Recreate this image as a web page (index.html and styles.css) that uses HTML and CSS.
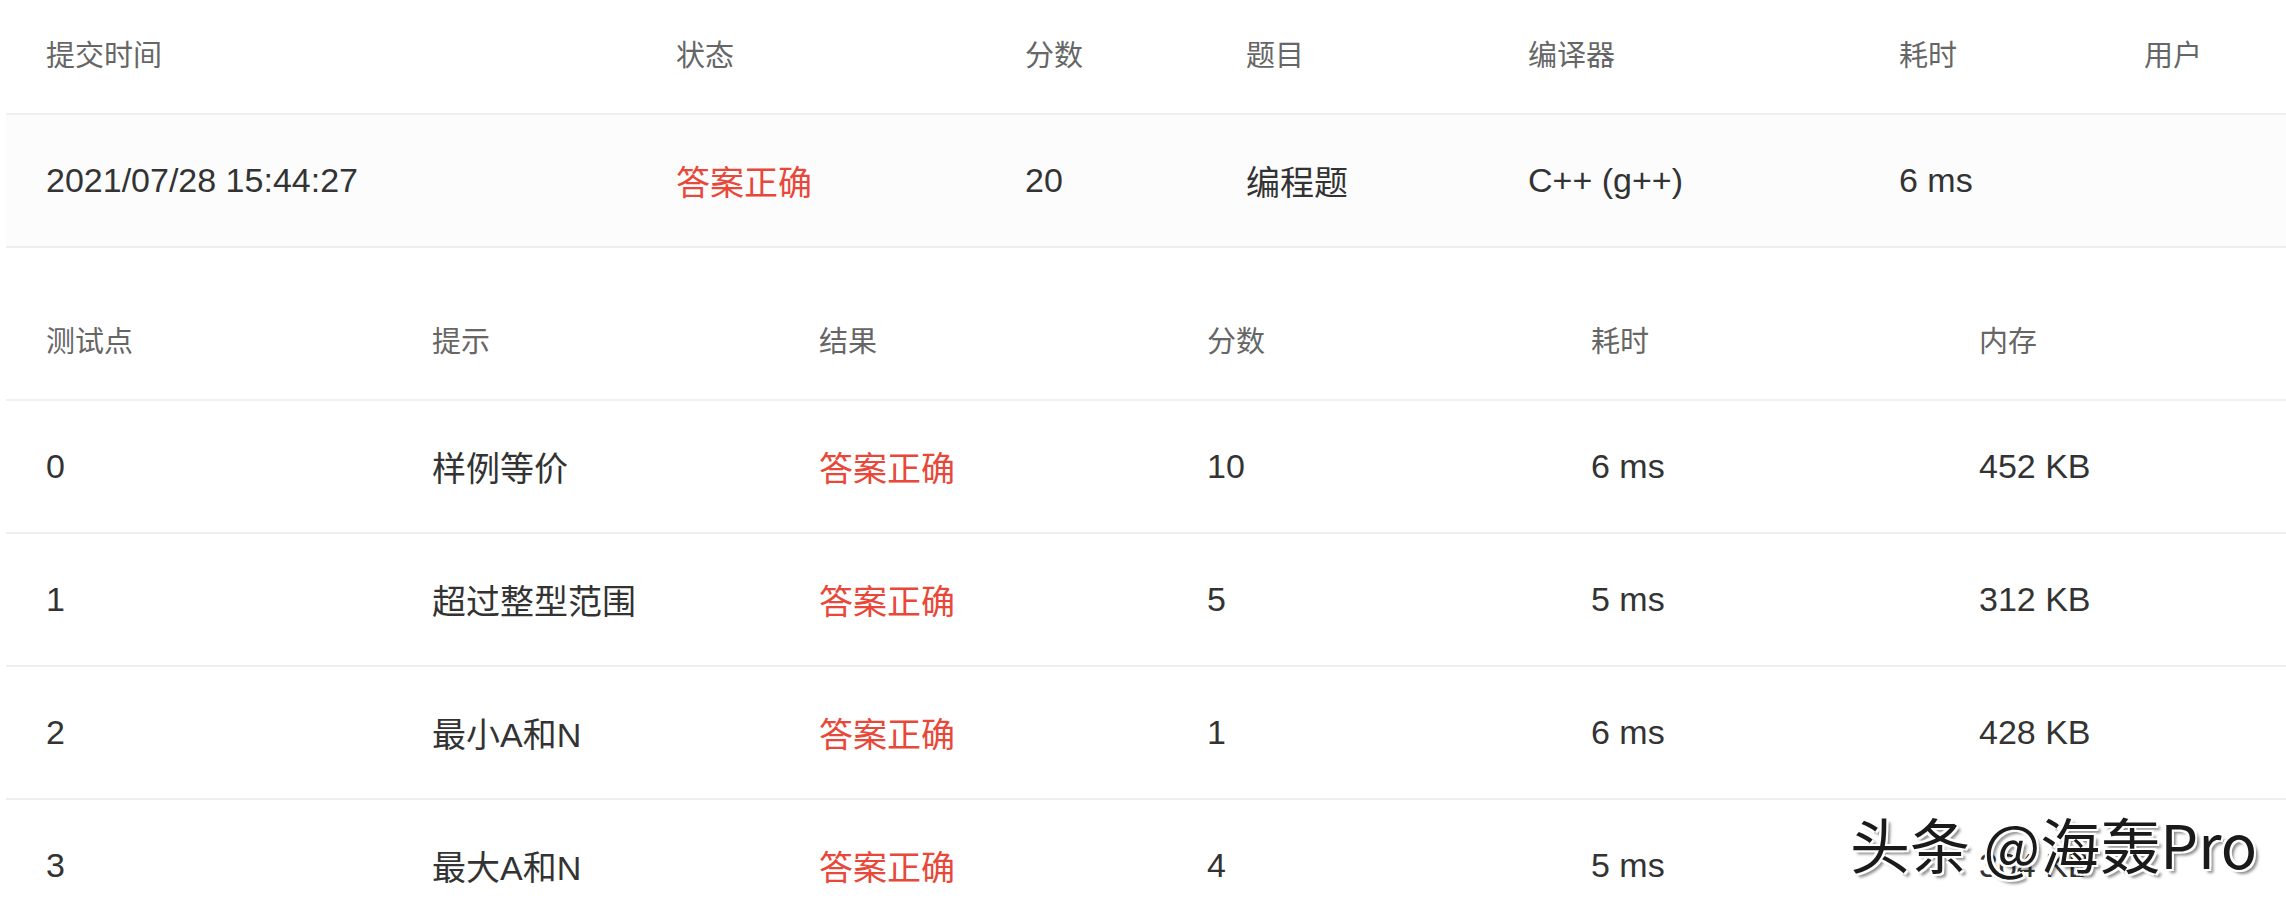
FILE: index.html
```html
<!DOCTYPE html>
<html lang="zh-CN">
<head>
<meta charset="utf-8">
<title>提交详情</title>
<link rel="stylesheet" href="styles.css">
</head>
<body>
<div class="page">
  <table class="grid summary">
    <colgroup>
      <col class="s1"><col class="s2"><col class="s3"><col class="s4"><col class="s5"><col class="s6"><col class="s7">
    </colgroup>
    <thead>
      <tr><th>提交时间</th><th>状态</th><th>分数</th><th>题目</th><th>编译器</th><th>耗时</th><th>用户</th></tr>
    </thead>
    <tbody>
      <tr class="shade"><td>2021/07/28 15:44:27</td><td class="ok">答案正确</td><td>20</td><td>编程题</td><td>C++ (g++)</td><td>6 ms</td><td></td></tr>
    </tbody>
  </table>

  <table class="grid cases">
    <colgroup>
      <col class="c1"><col class="c2"><col class="c3"><col class="c4"><col class="c5"><col class="c6">
    </colgroup>
    <thead>
      <tr><th>测试点</th><th>提示</th><th>结果</th><th>分数</th><th>耗时</th><th>内存</th></tr>
    </thead>
    <tbody>
      <tr><td>0</td><td>样例等价</td><td class="ok">答案正确</td><td>10</td><td>6 ms</td><td>452 KB</td></tr>
      <tr><td>1</td><td>超过整型范围</td><td class="ok">答案正确</td><td>5</td><td>5 ms</td><td>312 KB</td></tr>
      <tr><td>2</td><td>最小A和N</td><td class="ok">答案正确</td><td>1</td><td>6 ms</td><td>428 KB</td></tr>
      <tr><td>3</td><td>最大A和N</td><td class="ok">答案正确</td><td>4</td><td>5 ms</td><td>364 KB</td></tr>
    </tbody>
  </table>
</div>
<div class="watermark">头条 @海轰Pro</div>
</body>
</html>
```

FILE: styles.css
```css
html, body {
  margin: 0;
  padding: 0;
  background: #ffffff;
  overflow: hidden;
}

body {
  font-family: "Liberation Sans", "Noto Sans CJK SC", sans-serif;
  color: #333333;
  width: 2286px;
  height: 902px;
  position: relative;
}

.page {
  padding-left: 6px;
}

.grid {
  width: 2280px;
  table-layout: fixed;
  border-collapse: separate;
  border-spacing: 0;
}

.grid th,
.grid td {
  box-sizing: border-box;
  text-align: left;
  vertical-align: middle;
  padding: 0 0 0 40px;
  border-bottom: 2px solid #efefef;
  white-space: nowrap;
}

.grid th {
  height: 115px;
  padding-bottom: 8px;
  font-size: 29px;
  font-weight: normal;
  color: #666666;
}

.grid td {
  height: 133px;
  font-size: 34px;
  color: #333333;
}

.grid .shade td {
  background: #fcfcfc;
}

.grid td.ok {
  color: #e8483a;
}

.s1 { width: 630px; }
.s2 { width: 349px; }
.s3 { width: 221px; }
.s4 { width: 282px; }
.s5 { width: 371px; }
.s6 { width: 245px; }
.s7 { width: 182px; }

.cases {
  margin-top: 38px;
}

.c1 { width: 386px; }
.c2 { width: 387px; }
.c3 { width: 388px; }
.c4 { width: 384px; }
.c5 { width: 388px; }
.c6 { width: 347px; }

.watermark {
  position: absolute;
  left: 1850px;
  top: 806px;
  font-family: "Noto Sans CJK SC", "Liberation Sans", sans-serif;
  font-size: 60px;
  line-height: 74px;
  color: #1a1a1a;
  white-space: nowrap;
  text-shadow:
    -2px -2px 0 #ffffff,
    2px -2px 0 #ffffff,
    -2px 2px 0 #ffffff,
    2px 2px 0 #ffffff,
    4px 4px 3px rgba(0, 0, 0, 0.45);
}
```
